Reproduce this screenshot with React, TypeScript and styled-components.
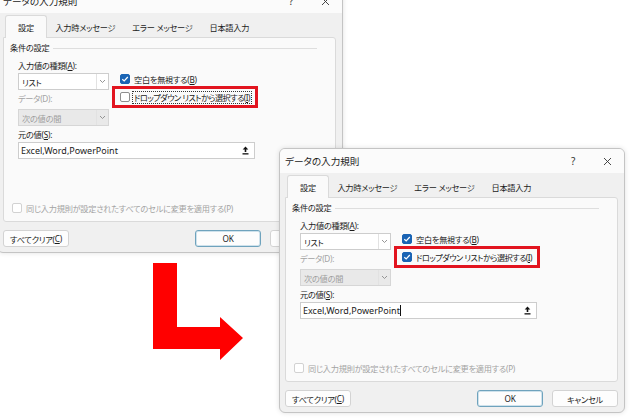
import React from "react";
import styled, { createGlobalStyle } from "styled-components";

const GlobalStyle = createGlobalStyle`
  html, body {
    margin: 0;
    padding: 0;
    background: #ffffff;
  }
  body {
    font-family: "Noto Sans", "Noto Sans CJK JP", sans-serif;
    font-feature-settings: "palt";
    color: #1b1b1b;
  }
`;

const Desktop = styled.div`
  position: relative;
  width: 630px;
  height: 419px;
  overflow: hidden;
  background: #ffffff;
`;

const Window = styled.div<{ $left: number; $top: number }>`
  position: absolute;
  left: ${(p) => p.$left}px;
  top: ${(p) => p.$top}px;
  width: 346px;
  height: 265px;
  box-sizing: border-box;
  display: flex;
  flex-direction: column;
  border: 1px solid #c4c4c4;
  border-radius: 6px;
  background: #f0f0f0;
  box-shadow: 0 0 5px rgba(0, 0, 0, 0.12);
  overflow: hidden;
  font-size: 8.2px;
  letter-spacing: -0.25px;
`;

const TitleBar = styled.div`
  height: 24px;
  flex: none;
  display: flex;
  align-items: center;
  background: #fbfbfb;
  padding-left: 5px;
`;

const Title = styled.span`
  font-size: 9.6px;
  letter-spacing: 0;
  flex: 1;
`;

const TitleButton = styled.span`
  width: 34px;
  font-size: 10px;
  color: #333;
  display: flex;
  justify-content: center;
  align-items: center;
`;

const Body = styled.div`
  flex: 1;
  display: flex;
  flex-direction: column;
  padding: 2px 6px 5px 5px;
`;

const TabStrip = styled.div`
  display: flex;
  height: 22px;
  padding-left: 2px;
`;

const Tab = styled.div<{ $active?: boolean }>`
  display: flex;
  align-items: center;
  padding: 0 ${(p) => (p.$active ? 12 : 7.5)}px;
  background: ${(p) => (p.$active ? "#fafafa" : "transparent")};
  border: 1px solid ${(p) => (p.$active ? "#dadada" : "transparent")};
  border-bottom: none;
  border-radius: 3px 3px 0 0;
  margin-bottom: -1px;
  position: relative;
  z-index: 1;
`;

const Panel = styled.div`
  height: 185px;
  box-sizing: border-box;
  display: flex;
  flex-direction: column;
  background: #fafafa;
  border: 1px solid #dadada;
  border-radius: 0 3px 3px 3px;
  padding: 4px 6px 7px 6px;
`;

const GroupHeader = styled.div`
  display: flex;
  align-items: center;
  gap: 4px;
  line-height: 12px;
  padding-right: 12px;

  &::after {
    content: "";
    flex: 1;
    height: 1px;
    background: #dedede;
  }
`;

const Columns = styled.div`
  display: flex;
  gap: 3px;
  margin-top: 6px;
  padding-left: 8px;
`;

const LeftColumn = styled.div`
  width: 91px;
  display: flex;
  flex-direction: column;
`;

const RightColumn = styled.div`
  display: flex;
  flex-direction: column;
  align-items: flex-start;
  padding-top: 13px;
`;

const FieldLabel = styled.div<{ $disabled?: boolean; $gap?: number }>`
  line-height: 12px;
  color: ${(p) => (p.$disabled ? "#a3a3a3" : "#1b1b1b")};
  margin-top: ${(p) => p.$gap ?? 0}px;
  margin-bottom: 1px;
  white-space: nowrap;
`;

const SelectBox = styled.div<{ $disabled?: boolean; $gap?: number }>`
  height: 17px;
  box-sizing: border-box;
  display: flex;
  align-items: stretch;
  border: 1px solid ${(p) => (p.$disabled ? "#d6d6d6" : "#cdcdcd")};
  background: ${(p) => (p.$disabled ? "#e9e9e9" : "#ffffff")};
  color: ${(p) => (p.$disabled ? "#9d9d9d" : "#1b1b1b")};
  margin-top: ${(p) => p.$gap ?? 0}px;
`;

const SelectValue = styled.span`
  flex: 1;
  display: flex;
  align-items: center;
  padding-left: 3px;
`;

const SelectArrow = styled.span`
  width: 11px;
  display: flex;
  align-items: center;
  justify-content: center;
  border-left: 1px solid #e2e2e2;
`;

const CheckRow = styled.div<{ $disabled?: boolean }>`
  display: flex;
  align-items: center;
  gap: 3px;
  height: 12px;
  white-space: nowrap;
  color: ${(p) => (p.$disabled ? "#a3a3a3" : "#1b1b1b")};
`;

const PlainCheckRow = styled(CheckRow)`
  padding-left: 8px;
`;

const Highlight = styled.div`
  margin-top: 1px;
  height: 22px;
  box-sizing: border-box;
  display: flex;
  align-items: center;
  border: 3px solid #e2141f;
  padding: 0 5px;
  width: 146px;
`;

const Box = styled.span<{ $checked?: boolean; $disabled?: boolean }>`
  width: 10px;
  height: 10px;
  box-sizing: border-box;
  flex: none;
  border-radius: 2px;
  display: flex;
  align-items: center;
  justify-content: center;
  border: 1px solid
    ${(p) => (p.$checked ? "#1a64b4" : p.$disabled ? "#d2d2d2" : "#8e8e8e")};
  background: ${(p) => (p.$checked ? "#1a64b4" : "#ffffff")};
`;

const CheckText = styled.span<{ $focus?: boolean; $kana?: boolean }>`
  line-height: 11px;
  padding: 0 1px;
  letter-spacing: ${(p) => (p.$kana ? -0.55 : -0.25)}px;
  outline: ${(p) => (p.$focus ? "1px dotted #333" : "none")};
`;

const SourceLabel = styled(FieldLabel)`
  padding-left: 8px;
`;

const SourceInput = styled.div`
  margin-left: 8px;
  width: 237px;
  height: 17px;
  box-sizing: border-box;
  display: flex;
  align-items: center;
  background: #ffffff;
  border: 1px solid #cdcdcd;
  padding: 0 5px 0 2px;
`;

const InputText = styled.span`
  flex: 1;
  display: flex;
  align-items: center;
  font-size: 9px;
  letter-spacing: 0;
`;

const Caret = styled.span`
  width: 1px;
  height: 11px;
  background: #111;
`;

const BottomCheck = styled(CheckRow)`
  margin-top: auto;
  padding-left: 2px;
`;

const ButtonRow = styled.div`
  display: flex;
  justify-content: space-between;
  margin-top: 8px;
`;

const ButtonGroup = styled.div`
  display: flex;
  gap: 9px;
`;

const Button = styled.div<{ $default?: boolean }>`
  width: 66px;
  height: 17px;
  box-sizing: border-box;
  display: flex;
  align-items: center;
  justify-content: center;
  background: #fdfdfd;
  border: 1px solid ${(p) => (p.$default ? "#6fa3bd" : "#d3d3d3")};
  box-shadow: ${(p) => (p.$default ? "inset 0 0 0 1px #cfe2ec" : "none")};
  border-radius: 3px;
`;

const U = styled.span`
  text-decoration: underline;
`;

const ArrowCanvas = styled.svg`
  position: absolute;
  left: 150px;
  top: 260px;
`;

const Chevron = () => (
  <svg width="7" height="5" viewBox="0 0 7 5">
    <path d="M1 1 L3.5 3.5 L6 1" fill="none" stroke="#8a8a8a" strokeWidth="0.9" />
  </svg>
);

const Tick = () => (
  <svg width="8" height="8" viewBox="0 0 8 8">
    <path d="M1.3 4.2 L3.2 6 L6.8 2" fill="none" stroke="#ffffff" strokeWidth="1.2" />
  </svg>
);

const CollapseIcon = () => (
  <svg width="7" height="9" viewBox="0 0 7 9">
    <path d="M3.5 0.5 L6.3 3.6 L4.3 3.6 L4.3 6 L2.7 6 L2.7 3.6 L0.7 3.6 Z" fill="#111" />
    <rect x="0.5" y="7.2" width="6" height="1.3" fill="#111" />
  </svg>
);

const CloseIcon = () => (
  <svg width="9" height="9" viewBox="0 0 9 9">
    <path d="M1 1 L8 8 M8 1 L1 8" stroke="#333" strokeWidth="0.9" />
  </svg>
);

type DialogProps = {
  left: number;
  top: number;
  dropdownChecked: boolean;
  focused: boolean;
  caret: boolean;
};

const ValidationDialog: React.FC<DialogProps> = ({
  left,
  top,
  dropdownChecked,
  focused,
  caret,
}) => (
  <Window $left={left} $top={top}>
    <TitleBar>
      <Title>データの入力規則</Title>
      <TitleButton>?</TitleButton>
      <TitleButton>
        <CloseIcon />
      </TitleButton>
    </TitleBar>
    <Body>
      <TabStrip>
        <Tab $active>設定</Tab>
        <Tab>入力時メッセージ</Tab>
        <Tab>エラー メッセージ</Tab>
        <Tab>日本語入力</Tab>
      </TabStrip>
      <Panel>
        <GroupHeader>条件の設定</GroupHeader>
        <Columns>
          <LeftColumn>
            <FieldLabel>
              入力値の種類(<U>A</U>):
            </FieldLabel>
            <SelectBox>
              <SelectValue>リスト</SelectValue>
              <SelectArrow>
                <Chevron />
              </SelectArrow>
            </SelectBox>
            <FieldLabel $disabled $gap={3}>
              データ(D):
            </FieldLabel>
            <SelectBox $disabled $gap={3}>
              <SelectValue>次の値の間</SelectValue>
              <SelectArrow>
                <Chevron />
              </SelectArrow>
            </SelectBox>
          </LeftColumn>
          <RightColumn>
            <PlainCheckRow>
              <Box $checked>
                <Tick />
              </Box>
              <CheckText>
                空白を無視する(<U>B</U>)
              </CheckText>
            </PlainCheckRow>
            <Highlight>
              <CheckRow>
                <Box $checked={dropdownChecked}>
                  {dropdownChecked && <Tick />}
                </Box>
                <CheckText $focus={focused} $kana>
                  ドロップダウン リストから選択する(<U>I</U>)
                </CheckText>
              </CheckRow>
            </Highlight>
          </RightColumn>
        </Columns>
        <SourceLabel $gap={3}>
          元の値(<U>S</U>):
        </SourceLabel>
        <SourceInput>
          <InputText>
            Excel,Word,PowerPoint
            {caret && <Caret />}
          </InputText>
          <CollapseIcon />
        </SourceInput>
        <BottomCheck $disabled>
          <Box $disabled />
          <CheckText>同じ入力規則が設定されたすべてのセルに変更を適用する(P)</CheckText>
        </BottomCheck>
      </Panel>
      <ButtonRow>
        <Button>
          すべてクリア(<U>C</U>)
        </Button>
        <ButtonGroup>
          <Button $default>OK</Button>
          <Button>キャンセル</Button>
        </ButtonGroup>
      </ButtonRow>
    </Body>
  </Window>
);

export default function App() {
  return (
    <Desktop>
      <GlobalStyle />
      <ValidationDialog left={-3} top={-12} dropdownChecked={false} focused caret={false} />
      <ArrowCanvas width="96" height="104" viewBox="0 0 96 104">
        <polygon
          points="3,3 27,3 27,67 70,67 70,57 93,78 70,100 70,89 3,89"
          fill="#ff0000"
        />
      </ArrowCanvas>
      <ValidationDialog left={279} top={148} dropdownChecked focused={false} caret />
    </Desktop>
  );
}
